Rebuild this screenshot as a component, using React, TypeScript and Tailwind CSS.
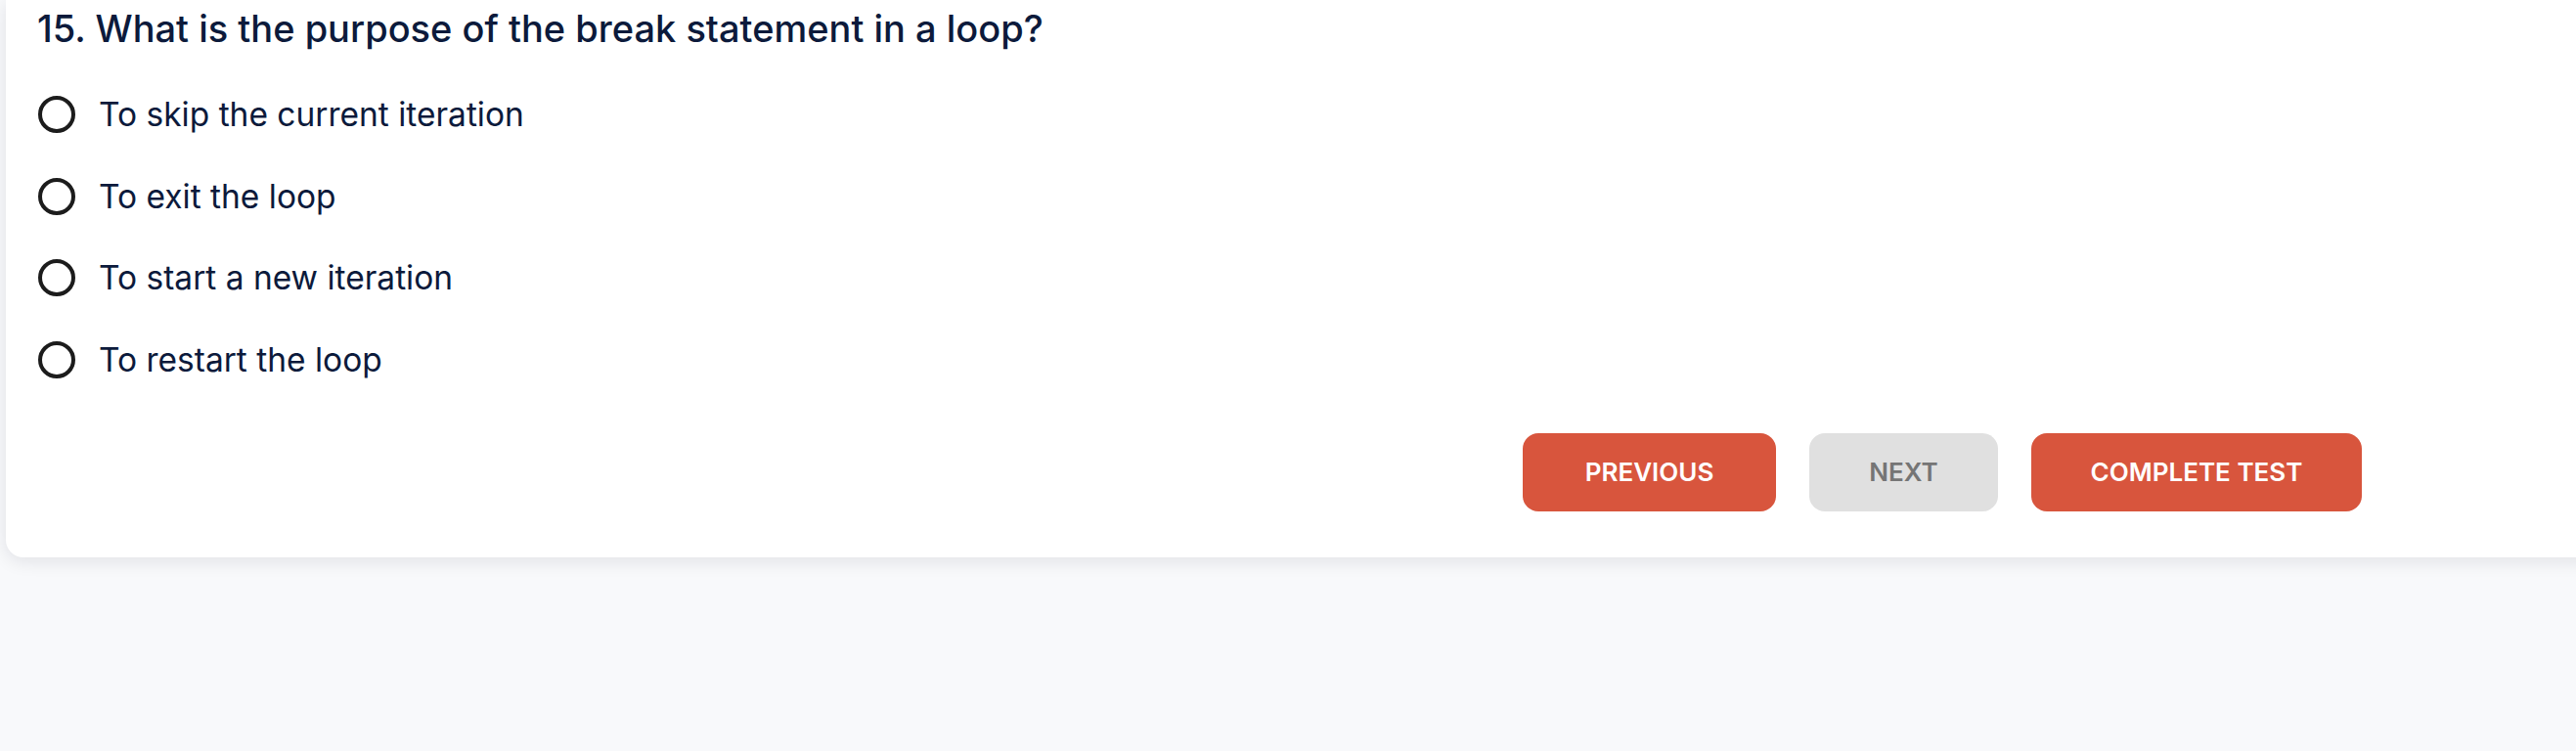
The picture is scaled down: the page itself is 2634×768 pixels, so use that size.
import { useState } from "react";

const options = [
  "To skip the current iteration",
  "To exit the loop",
  "To start a new iteration",
  "To restart the loop",
];

export default function App() {
  const [picked, setPicked] = useState<number | null>(null);

  return (
    <div
      className="min-h-screen w-full overflow-hidden bg-[#f8f9fb]"
      style={{ fontFamily: "Inter, 'Open Sans', sans-serif" }}
    >
      <div className="ml-[6px] mr-[-40px] rounded-b-[18px] bg-white pl-[32px] pb-[47px] shadow-[0_4px_18px_rgba(15,23,42,0.10)]">
        <h2 className="pt-[5px] text-[38px] leading-[48px] font-medium text-[#0c1a3b]">
          15. What is the purpose of the break statement in a loop?
        </h2>

        <div className="mt-[40px] flex flex-col gap-[35.5px]">
          {options.map((opt, i) => (
            <label key={i} className="flex h-[48px] cursor-pointer items-center gap-[24px] pl-[1px]">
              <span
                onClick={() => setPicked(i)}
                className="flex h-[38px] w-[38px] shrink-0 items-center justify-center rounded-full border-[4px] border-[#1c1c1c]"
              >
                {picked === i && <span className="h-[18px] w-[18px] rounded-full bg-[#1c1c1c]" />}
              </span>
              <span className="text-[33.5px] leading-[48px] text-[#0c1a3b]">{opt}</span>
            </label>
          ))}
        </div>

        <div className="mt-[51px] flex gap-[34px] pl-[1519px]">
          <button className="h-[80px] w-[259px] rounded-[16px] bg-[#d8553d] text-[26px] font-semibold text-white">
            PREVIOUS
          </button>
          <button className="h-[80px] w-[193px] rounded-[16px] bg-[#e0e0e0] text-[26px] font-semibold text-[#757575]">
            NEXT
          </button>
          <button className="h-[80px] w-[338px] rounded-[16px] bg-[#d8553d] text-[26px] font-semibold text-white">
            COMPLETE TEST
          </button>
        </div>
      </div>
    </div>
  );
}
